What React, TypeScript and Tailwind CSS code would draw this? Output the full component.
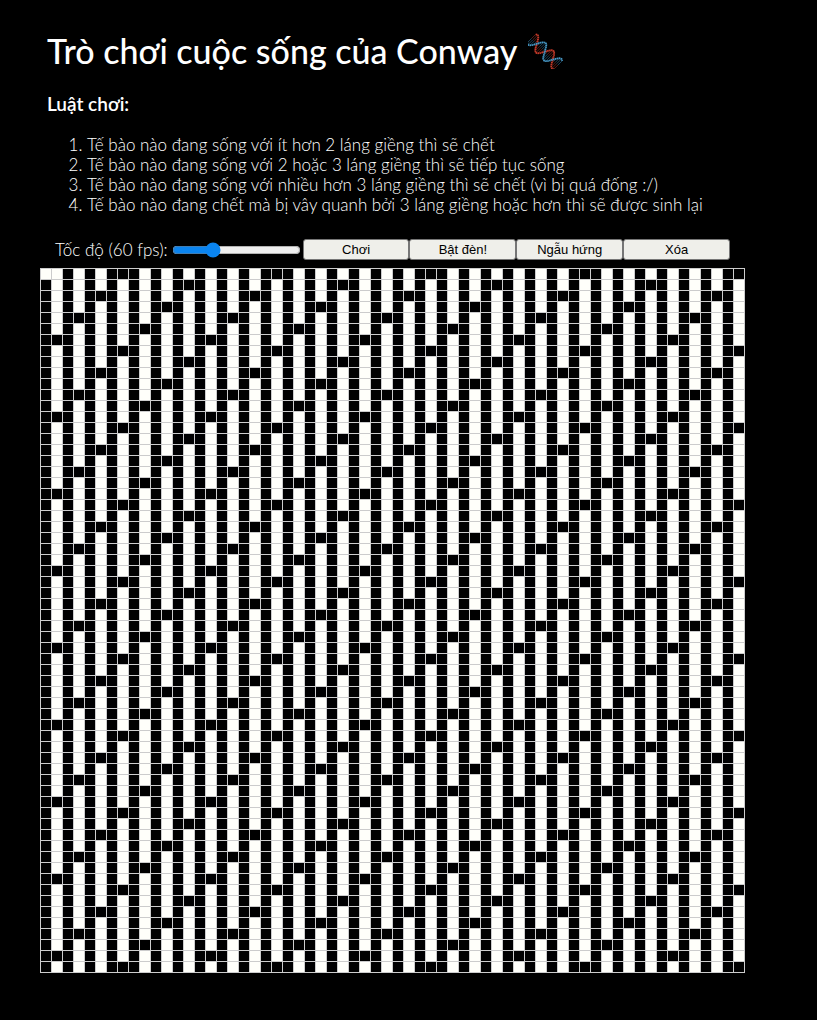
import { useEffect, useState } from 'react'
import type { MouseEvent } from 'react'

const SIZE = 64

const RULES = [
  'Tế bào nào đang sống với ít hơn 2 láng giềng thì sẽ chết',
  'Tế bào nào đang sống với 2 hoặc 3 láng giềng thì sẽ tiếp tục sống',
  'Tế bào nào đang sống với nhiều hơn 3 láng giềng thì sẽ chết (vì bị quá đống :/)',
  'Tế bào nào đang chết mà bị vây quanh bởi 3 láng giềng hoặc hơn thì sẽ được sinh lại',
]

function initialCells(): boolean[] {
  return Array.from({ length: SIZE * SIZE }, (_, i) => i === 0 || (i % 2 !== 0 && i % 7 !== 0))
}

function step(cells: boolean[]): boolean[] {
  return cells.map((alive, i) => {
    const row = Math.floor(i / SIZE)
    const col = i % SIZE
    let n = 0
    for (let dr = -1; dr <= 1; dr++) {
      for (let dc = -1; dc <= 1; dc++) {
        if (dr === 0 && dc === 0) continue
        const r = (row + dr + SIZE) % SIZE
        const c = (col + dc + SIZE) % SIZE
        if (cells[r * SIZE + c]) n++
      }
    }
    return n === 3 || (alive && n === 2)
  })
}

// Two sine strands running from the top left to the bottom right, crossing three times.
const STEPS = Array.from({ length: 41 }, (_, i) => i / 40)
const strand = (t: number, sign: number) => {
  const off = -sign * 4.8 * Math.sin((Math.PI * (t - 0.2)) / 0.3)
  return [3.5 + 26.5 * t + off, 5.5 + 26.5 * t - off]
}
const line = (sign: number) => STEPS.map((t) => strand(t, sign).map((v) => v.toFixed(1)).join(',')).join(' ')

function Dna() {
  return (
    <svg viewBox="0 0 36 36" className="size-9" role="img" aria-label="ADN">
      {STEPS.filter((_, i) => i % 2 === 0).map((t) => {
        const [x1, y1] = strand(t, 1)
        const [x2, y2] = strand(t, -1)
        const mx = (x1 + x2) / 2
        const my = (y1 + y2) / 2
        return (
          <g key={t} strokeWidth="0.7">
            <line x1={x1} y1={y1} x2={mx} y2={my} stroke="#7a261d" />
            <line x1={mx} y1={my} x2={x2} y2={y2} stroke="#285f7e" />
          </g>
        )
      })}
      <polyline points={line(1)} fill="none" stroke="#c53929" strokeWidth="1.8" strokeDasharray="1.6 0.4" />
      <polyline points={line(-1)} fill="none" stroke="#4596c4" strokeWidth="1.8" strokeDasharray="1.6 0.4" />
    </svg>
  )
}

const buttonClass =
  'h-[21px] flex-1 rounded-[3px] border border-[#767676] bg-[#efefea] font-["Liberation_Sans",Arial,sans-serif] text-[13px] leading-4 text-black'

export default function App() {
  const [cells, setCells] = useState<boolean[]>(initialCells)
  const [fps, setFps] = useState(60)
  const [playing, setPlaying] = useState(false)
  const [lit, setLit] = useState(false)

  useEffect(() => {
    if (!playing) return
    const id = setInterval(() => setCells(step), 1000 / fps)
    return () => clearInterval(id)
  }, [playing, fps])

  const toggle = (e: MouseEvent<HTMLDivElement>) => {
    const index = (e.target as HTMLElement).dataset.index
    if (index === undefined) return
    setCells((prev) => prev.map((alive, i) => (i === Number(index) ? !alive : alive)))
  }

  return (
    <div
      className={`min-h-screen px-10 pt-[30px] pb-12 font-["Lato","Noto_Sans",sans-serif] ${lit ? 'bg-white text-black' : 'bg-black text-white'}`}
    >
      <header className="px-[7px]">
        <h1 className="flex items-center gap-[10px] text-[34px] leading-[42px] font-medium">
          Trò chơi cuộc sống của Conway <Dna />
        </h1>
        <h2 className="mt-5 text-[19px] leading-6 font-semibold">Luật chơi:</h2>
        <ol className="mt-[19px] list-decimal pl-10 text-[17px] leading-5 font-light">
          {RULES.map((rule) => (
            <li key={rule}>{rule}</li>
          ))}
        </ol>
      </header>
      <div className="mt-6 flex max-w-[690px] items-center pl-[15px]">
        <label htmlFor="speed" className="text-[17px] leading-5 font-light whitespace-nowrap">
          Tốc độ ({fps} fps):
        </label>
        <input
          id="speed"
          type="range"
          min={1}
          max={200}
          value={fps}
          onChange={(e) => setFps(Number(e.target.value))}
          className="mr-[2px] ml-1 h-4 w-[129px] accent-[#0a84f0]"
        />
        <div className="flex flex-1">
          <button type="button" className={buttonClass} onClick={() => setPlaying(!playing)}>
            {playing ? 'Dừng' : 'Chơi'}
          </button>
          <button type="button" className={buttonClass} onClick={() => setLit(!lit)}>
            Bật đèn!
          </button>
          <button
            type="button"
            className={buttonClass}
            onClick={() => setCells((prev) => prev.map(() => Math.random() < 0.5))}
          >
            Ngẫu hứng
          </button>
          <button type="button" className={buttonClass} onClick={() => setCells((prev) => prev.map(() => false))}>
            Xóa
          </button>
        </div>
      </div>
      <div
        className="mt-2 grid w-fit grid-cols-[repeat(64,10px)] gap-px bg-[#cccccc] p-px"
        onClick={toggle}
      >
        {cells.map((alive, i) => (
          <div key={i} data-index={i} className={alive ? 'h-[10px] bg-[#fffffa]' : 'h-[10px] bg-black'} />
        ))}
      </div>
    </div>
  )
}
